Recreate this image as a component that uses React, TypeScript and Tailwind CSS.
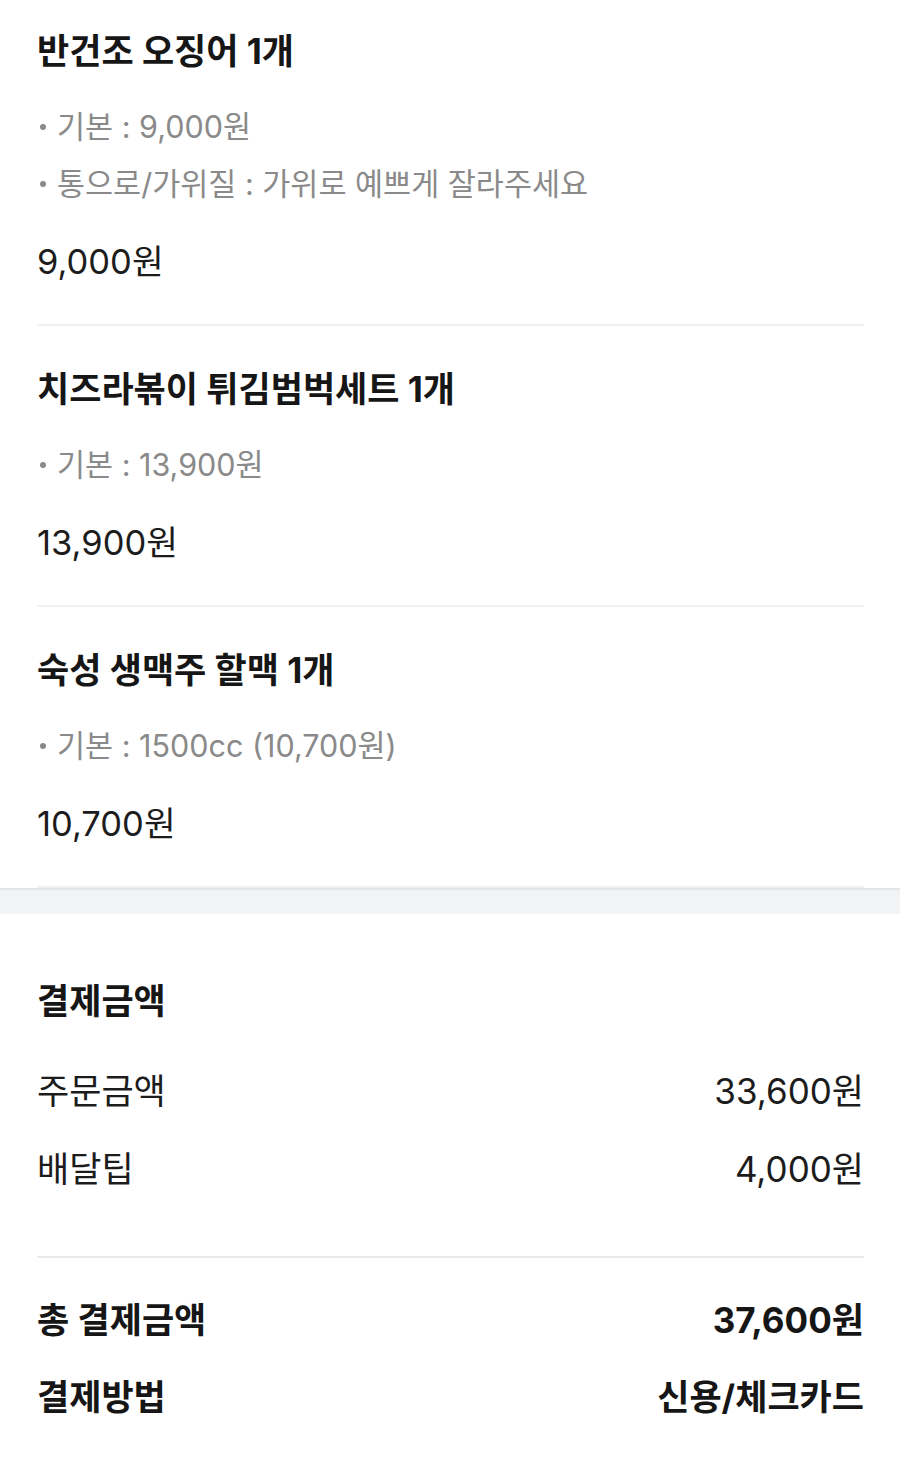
import React from "react";

const font = { fontFamily: 'Inter, "Noto Sans CJK KR", "Noto Sans", sans-serif' };

type Item = { title: string; options: string[]; price: string };

const items: Item[] = [
  {
    title: "반건조 오징어 1개",
    options: ["기본 : 9,000원", "통으로/가위질 : 가위로 예쁘게 잘라주세요"],
    price: "9,000원",
  },
  { title: "치즈라볶이 튀김범벅세트 1개", options: ["기본 : 13,900원"], price: "13,900원" },
  { title: "숙성 생맥주 할맥 1개", options: ["기본 : 1500cc (10,700원)"], price: "10,700원" },
];

function OrderItem({ item, first }: { item: Item; first: boolean }) {
  return (
    <div className={first ? "pt-[29px]" : "pt-[41px]"}>
      <div className="text-[35px] font-bold leading-[44px] text-[#161616]">{item.title}</div>
      <div className="mt-[25px]">
        {item.options.map((o) => (
          <div key={o} className="flex items-center text-[30.5px] leading-[57px] text-[#8a8a8a]">
            <span className="mr-[11px] ml-[3px] inline-block h-[6px] w-[6px] rounded-full bg-[#8a8a8a]" />
            <span>{o}</span>
          </div>
        ))}
      </div>
      <div className="mt-[28px] text-[34.5px] leading-[44px] text-[#1c1c1c]">{item.price}</div>
      <div className="mt-[40px] h-[2px] bg-[#f1f1f3]" />
    </div>
  );
}

function Row({ label, value, bold }: { label: string; value: string; bold?: boolean }) {
  return (
    <div
      className={`flex items-center justify-between text-[35px] leading-[44px] ${
        bold ? "font-bold text-[#161616]" : "text-[#1c1c1c]"
      }`}
    >
      <span>{label}</span>
      <span>{value}</span>
    </div>
  );
}

export default function App() {
  return (
    <div className="min-h-[1458px] w-full bg-white" style={font}>
      <div className="px-[37px] pr-[36px]">
        {items.map((it, i) => (
          <OrderItem key={i} item={it} first={i === 0} />
        ))}
      </div>
      <div className="h-[26px] border-t-2 border-[#e4e5e8] bg-[#f2f3f5]" />
      <div className="px-[37px] pr-[36px] pt-[65px] pb-[39px]">
        <div className="text-[35px] font-bold leading-[44px] text-[#161616]">결제금액</div>
        <div className="mt-[46px]">
          <Row label="주문금액" value="33,600원" />
        </div>
        <div className="mt-[34px]">
          <Row label="배달팁" value="4,000원" />
        </div>
        <div className="mt-[65px] h-[2px] bg-[#ebebeb]" />
        <div className="mt-[40px]">
          <Row label="총 결제금액" value="37,600원" bold />
        </div>
        <div className="mt-[33px]">
          <Row label="결제방법" value="신용/체크카드" bold />
        </div>
      </div>
    </div>
  );
}
